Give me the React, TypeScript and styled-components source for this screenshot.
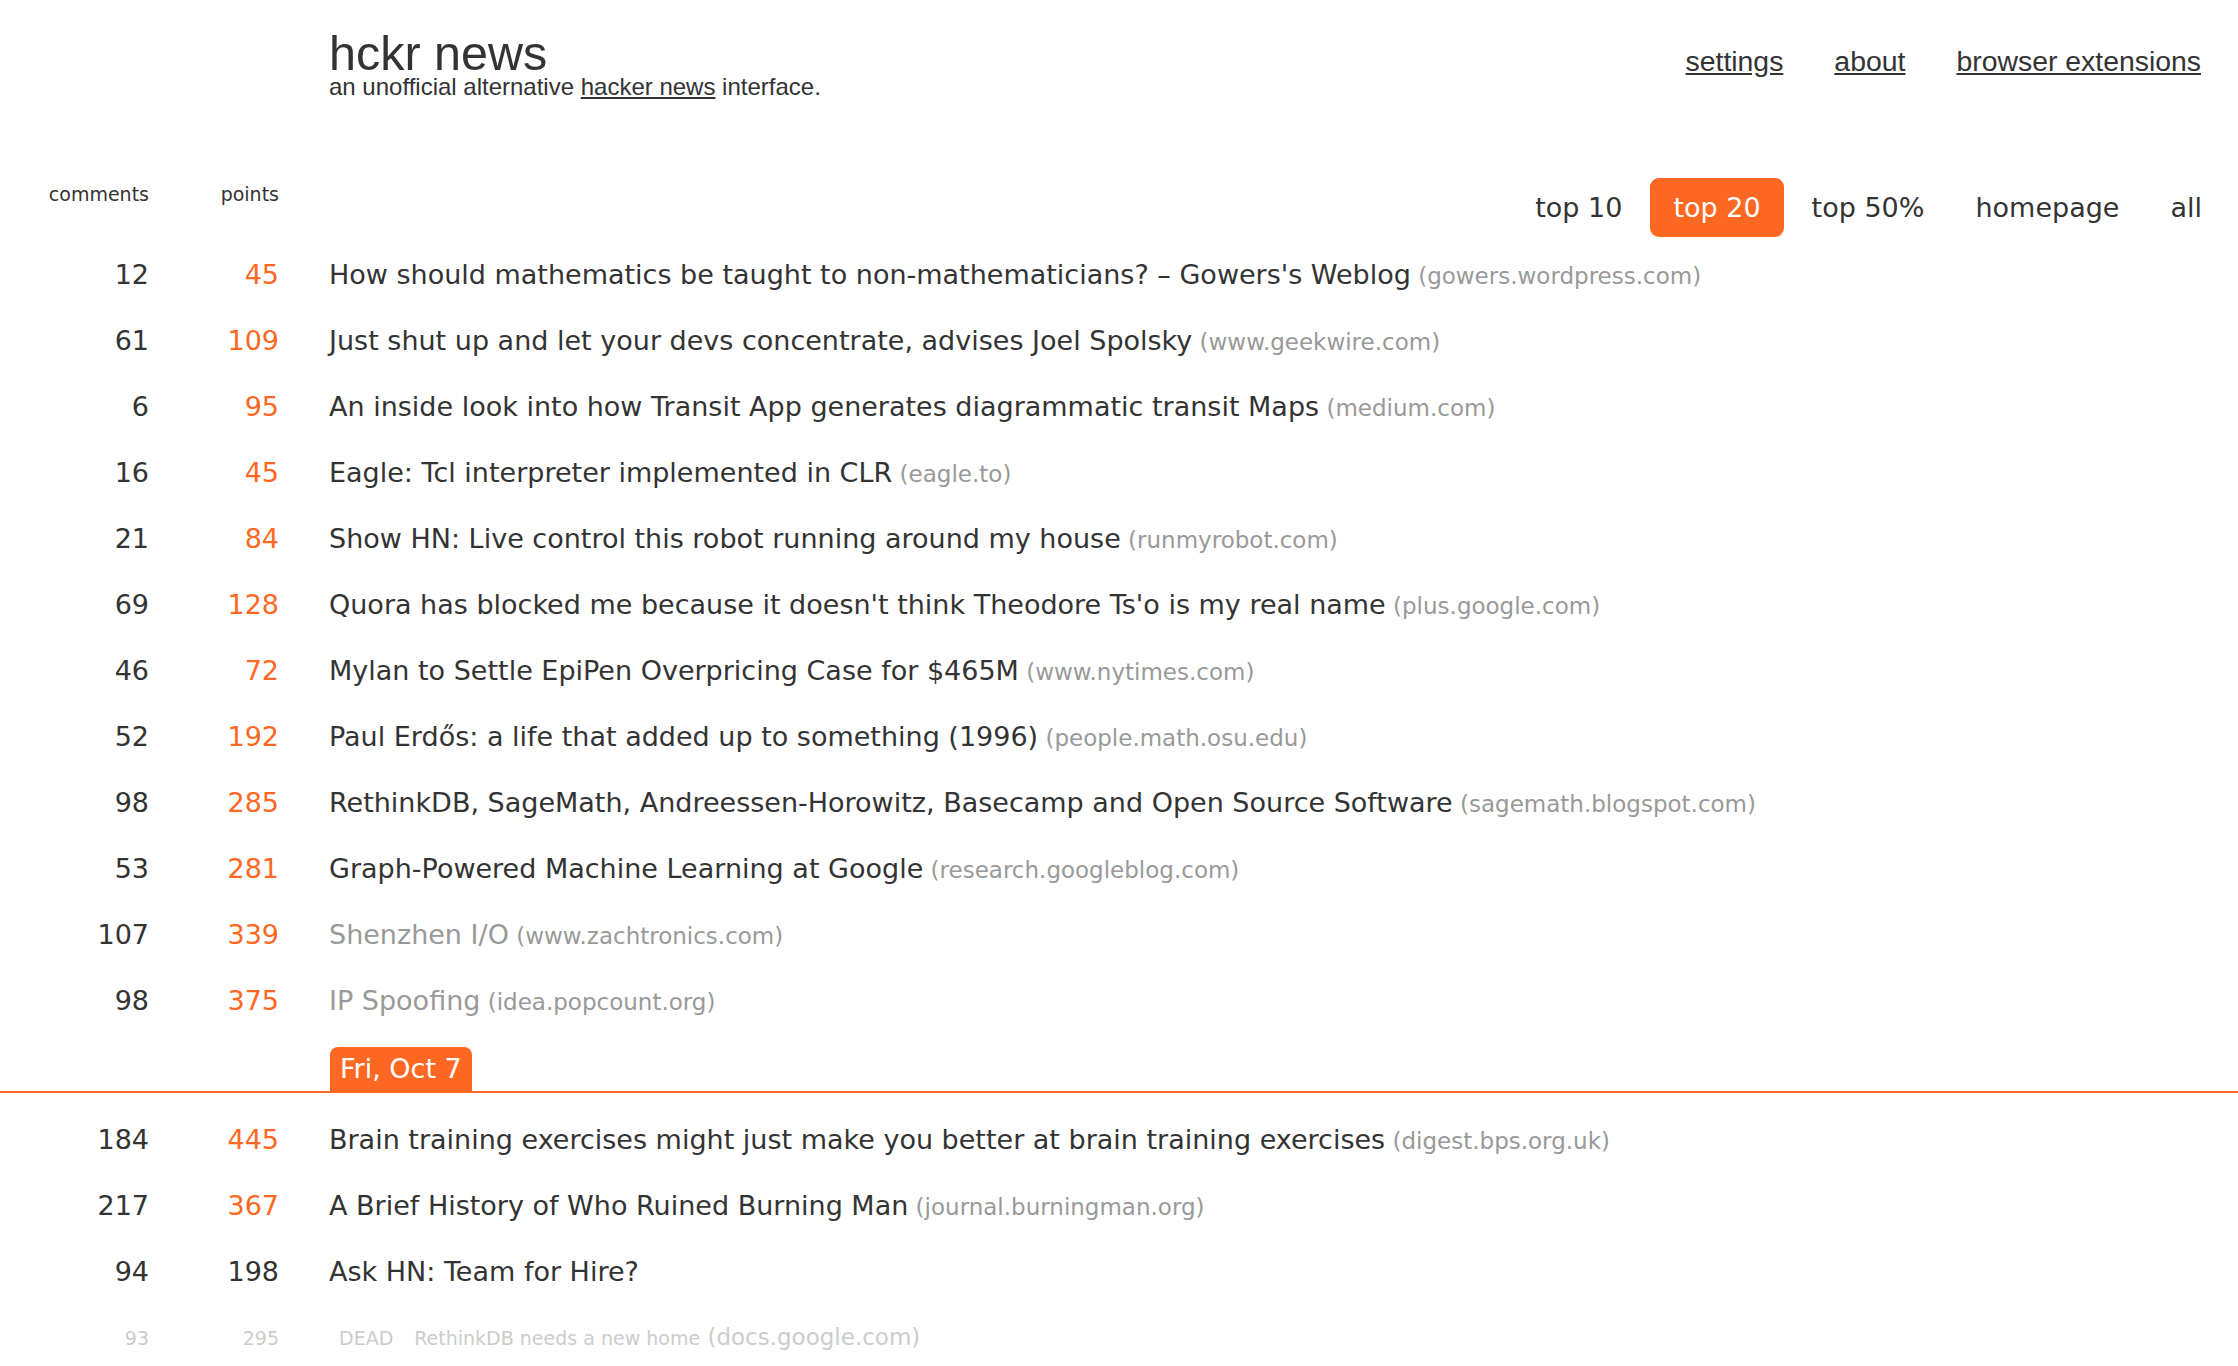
import React from "react";
import styled, { createGlobalStyle } from "styled-components";

const ORANGE = "#fe6823";
const INK = "#333333";
const MUTED = "#999999";
const FAINT = "#cccccc";
const UI_FONT = `"DejaVu Sans", "Liberation Sans", sans-serif`;
const HEAD_FONT = `"Liberation Sans", Arial, Helvetica, sans-serif`;

const GlobalStyle = createGlobalStyle`
  html, body { margin: 0; padding: 0; background: #fff; }
  body { font-family: ${UI_FONT}; color: ${INK}; }
  a { color: inherit; }
`;

const Page = styled.div`
  width: 100%;
  min-height: 1366px;
  overflow: hidden;
`;

const Header = styled.header`
  display: flex;
  justify-content: space-between;
  align-items: flex-start;
  padding: 29px 37px 0 329px;
`;

const Brand = styled.div`
  font-family: ${HEAD_FONT};
  color: ${INK};
`;

const Logo = styled.h1`
  margin: 0;
  font-size: 48.5px;
  line-height: 48px;
  font-weight: normal;
`;

const Tagline = styled.p`
  margin: 0;
  font-size: 24px;
  line-height: 20px;
`;

const TagLink = styled.a`
  text-decoration: underline;
`;

const TopNav = styled.nav`
  display: flex;
  gap: 51px;
  margin-top: 16px;
  font-family: ${HEAD_FONT};
  font-size: 28.4px;
  line-height: 32px;
`;

const TopLink = styled.a`
  color: ${INK};
  text-decoration: underline;
`;

const Columns = `
  display: grid;
  grid-template-columns: 149px 130px 1fr;
`;

const Controls = styled.div`
  ${Columns}
  align-items: start;
  margin-top: 81px;
  padding-right: 13px;
`;

const ColLabel = styled.div`
  text-align: right;
  font-size: 19px;
  line-height: 24px;
  margin-top: 4px;
`;

const Filters = styled.div`
  display: flex;
  justify-content: flex-end;
  gap: 5px;
`;

const Filter = styled.a<{ $active?: boolean }>`
  padding: 0 23px;
  font-size: 27px;
  line-height: 59px;
  border-radius: 9px;
  background: ${(p) => (p.$active ? ORANGE : "transparent")};
  color: ${(p) => (p.$active ? "#fff" : INK)};
  text-decoration: none;
`;

const List = styled.div`
  margin-top: 5px;
`;

const Row = styled.div<{ $dead?: boolean }>`
  ${Columns}
  height: 66px;
  font-size: ${(p) => (p.$dead ? "19px" : "27px")};
  line-height: 66px;
  color: ${(p) => (p.$dead ? FAINT : INK)};
`;

const Num = styled.span<{ $hot?: boolean }>`
  text-align: right;
  color: ${(p) => (p.$hot ? ORANGE : "inherit")};
`;

const TitleCell = styled.div`
  padding-left: 50px;
  white-space: nowrap;
`;

const StoryLink = styled.a<{ $visited?: boolean }>`
  color: ${(p) => (p.$visited ? MUTED : "inherit")};
  text-decoration: none;
`;

const Domain = styled.span<{ $dead?: boolean }>`
  color: ${(p) => (p.$dead ? FAINT : MUTED)};
  font-size: 23px;
  line-height: 1;
`;

const DeadTag = styled.span`
  margin-left: 10px;
  margin-right: 21px;
`;

const DayDivider = styled.div`
  display: flex;
  padding: 13px 0 0 330px;
  border-bottom: 2px solid ${ORANGE};
  margin-bottom: 14px;
`;

const DayBadge = styled.span`
  background: ${ORANGE};
  color: #fff;
  font-size: 27px;
  line-height: 44px;
  padding: 0 10px;
  border-radius: 8px 8px 0 0;
`;

type Story = {
  comments: number;
  points: number;
  hot: boolean;
  title: string;
  domain?: string;
  visited?: boolean;
};

const before: Story[] = [
  { comments: 12, points: 45, hot: true, title: "How should mathematics be taught to non-mathematicians? – Gowers's Weblog", domain: "gowers.wordpress.com" },
  { comments: 61, points: 109, hot: true, title: "Just shut up and let your devs concentrate, advises Joel Spolsky", domain: "www.geekwire.com" },
  { comments: 6, points: 95, hot: true, title: "An inside look into how Transit App generates diagrammatic transit Maps", domain: "medium.com" },
  { comments: 16, points: 45, hot: true, title: "Eagle: Tcl interpreter implemented in CLR", domain: "eagle.to" },
  { comments: 21, points: 84, hot: true, title: "Show HN: Live control this robot running around my house", domain: "runmyrobot.com" },
  { comments: 69, points: 128, hot: true, title: "Quora has blocked me because it doesn't think Theodore Ts'o is my real name", domain: "plus.google.com" },
  { comments: 46, points: 72, hot: true, title: "Mylan to Settle EpiPen Overpricing Case for $465M", domain: "www.nytimes.com" },
  { comments: 52, points: 192, hot: true, title: "Paul Erdős: a life that added up to something (1996)", domain: "people.math.osu.edu" },
  { comments: 98, points: 285, hot: true, title: "RethinkDB, SageMath, Andreessen-Horowitz, Basecamp and Open Source Software", domain: "sagemath.blogspot.com" },
  { comments: 53, points: 281, hot: true, title: "Graph-Powered Machine Learning at Google", domain: "research.googleblog.com" },
  { comments: 107, points: 339, hot: true, title: "Shenzhen I/O", domain: "www.zachtronics.com", visited: true },
  { comments: 98, points: 375, hot: true, title: "IP Spoofing", domain: "idea.popcount.org", visited: true },
];

const after: Story[] = [
  { comments: 184, points: 445, hot: true, title: "Brain training exercises might just make you better at brain training exercises", domain: "digest.bps.org.uk" },
  { comments: 217, points: 367, hot: true, title: "A Brief History of Who Ruined Burning Man", domain: "journal.burningman.org" },
  { comments: 94, points: 198, hot: false, title: "Ask HN: Team for Hire?" },
];

const filters = ["top 10", "top 20", "top 50%", "homepage", "all"];

function StoryRow({ s }: { s: Story }) {
  return (
    <Row>
      <Num>{s.comments}</Num>
      <Num $hot={s.hot}>{s.points}</Num>
      <TitleCell>
        <StoryLink href="#" $visited={s.visited}>{s.title}</StoryLink>
        {s.domain && <Domain> ({s.domain})</Domain>}
      </TitleCell>
    </Row>
  );
}

export default function App() {
  return (
    <Page>
      <GlobalStyle />
      <Header>
        <Brand>
          <Logo>hckr news</Logo>
          <Tagline>
            an unofficial alternative <TagLink href="#">hacker news</TagLink> interface.
          </Tagline>
        </Brand>
        <TopNav>
          <TopLink href="#">settings</TopLink>
          <TopLink href="#">about</TopLink>
          <TopLink href="#">browser extensions</TopLink>
        </TopNav>
      </Header>

      <Controls>
        <ColLabel>comments</ColLabel>
        <ColLabel>points</ColLabel>
        <Filters>
          {filters.map((f) => (
            <Filter key={f} href="#" $active={f === "top 20"}>{f}</Filter>
          ))}
        </Filters>
      </Controls>

      <List>
        {before.map((s, i) => (
          <StoryRow key={"b" + i} s={s} />
        ))}
        <DayDivider>
          <DayBadge>Fri, Oct 7</DayBadge>
        </DayDivider>
        {after.map((s, i) => (
          <StoryRow key={"a" + i} s={s} />
        ))}
        <Row $dead>
          <Num>93</Num>
          <Num>295</Num>
          <TitleCell>
            <DeadTag>DEAD</DeadTag>
            <StoryLink href="#">RethinkDB needs a new home</StoryLink>
            <Domain $dead> (docs.google.com)</Domain>
          </TitleCell>
        </Row>
      </List>
    </Page>
  );
}
